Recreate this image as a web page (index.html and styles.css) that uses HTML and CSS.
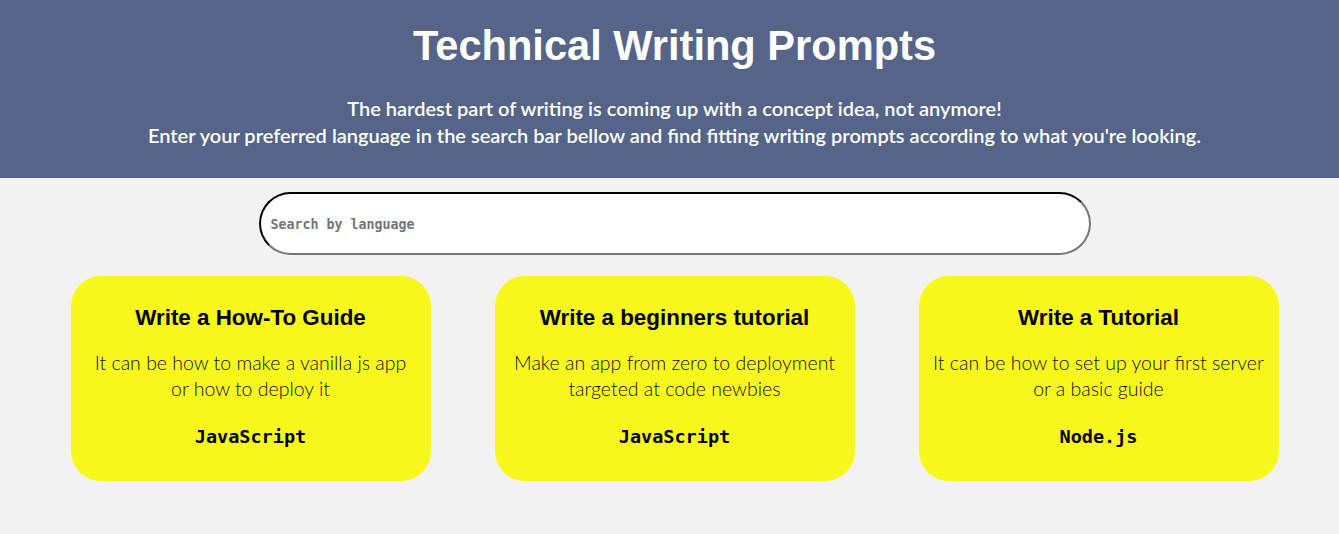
FILE: index.html
```html
<!DOCTYPE html>
<html lang="en">
<head>
<meta charset="utf-8">
<title>Technical Writing Prompts</title>
<link rel="stylesheet" href="styles.css">
</head>
<body>
<header class="hero">
  <h1 class="hero-title">Technical Writing Prompts</h1>
  <p class="hero-text">The hardest part of writing is coming up with a concept idea, not anymore!<br>Enter your preferred language in the search bar bellow and find fitting writing prompts according to what you're looking.</p>
</header>
<main class="content">
  <div class="search-row">
    <input class="search" type="text" placeholder="Search by language">
  </div>
  <section class="cards">
    <article class="card">
      <h2 class="card-title">Write a How-To Guide</h2>
      <p class="card-desc">It can be how to make a vanilla js app or how to deploy it</p>
      <p class="card-lang">JavaScript</p>
    </article>
    <article class="card">
      <h2 class="card-title">Write a beginners tutorial</h2>
      <p class="card-desc">Make an app from zero to deployment targeted at code newbies</p>
      <p class="card-lang">JavaScript</p>
    </article>
    <article class="card">
      <h2 class="card-title">Write a Tutorial</h2>
      <p class="card-desc">It can be how to set up your first server or a basic guide</p>
      <p class="card-lang">Node.js</p>
    </article>
  </section>
</main>
</body>
</html>
```

FILE: styles.css
```css
html, body {
  margin: 0;
  padding: 0;
}
body {
  background: #f2f2f2;
  min-height: 534px;
  font-family: "Lato", "Noto Sans", sans-serif;
}
.hero {
  background: #566489;
  color: #ffffff;
  text-align: center;
  padding: 22px 0 30px 10px;
}
.hero-title {
  margin: 0;
  font-family: "Liberation Sans", Arial, sans-serif;
  font-weight: bold;
  font-size: 41.6px;
  line-height: 47px;
}
.hero-text {
  margin: 26px 0 0;
  font-family: "Lato", sans-serif;
  font-weight: 600;
  font-size: 20px;
  line-height: 26.5px;
}
.content {
  padding-left: 10px;
}
.search-row {
  display: flex;
  justify-content: center;
  padding-top: 14px;
}
.search {
  box-sizing: border-box;
  width: 832px;
  height: 63px;
  border: 2px inset #767676;
  border-top-color: #1f1f1f;
  border-left-color: #1f1f1f;
  border-radius: 32px;
  padding: 2px 10px 0;
  background: #ffffff;
  font-family: "DejaVu Sans Mono", monospace;
  font-size: 13.3px;
  outline: none;
}
.search::placeholder {
  color: #757575;
  font-weight: bold;
}
.cards {
  display: flex;
  justify-content: center;
  gap: 64px;
  padding-top: 21px;
}
.card {
  box-sizing: border-box;
  width: 360px;
  height: 205px;
  background: #f7f71b;
  border-radius: 30px;
  padding: 29px 13px 0;
  text-align: center;
}
.card-title {
  margin: 0;
  font-family: "Liberation Sans", Arial, sans-serif;
  font-weight: bold;
  font-size: 22.4px;
  line-height: 25px;
  color: #000000;
}
.card-desc {
  margin: 20px 0 0;
  font-family: "Lato", sans-serif;
  font-weight: 300;
  font-size: 19.5px;
  line-height: 26px;
  color: #111111;
}
.card-lang {
  margin: 24px 0 0;
  font-family: "DejaVu Sans Mono", monospace;
  font-weight: bold;
  font-size: 18.5px;
  line-height: 22px;
  color: #000000;
}
```
